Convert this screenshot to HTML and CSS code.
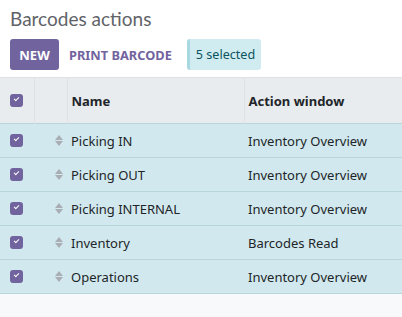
FILE: index.html
```html
<!DOCTYPE html>
<html>
<head>
<meta charset="utf-8">
<link rel="stylesheet" href="styles.css">
</head>
<body>
<div class="page">
  <div class="head">
    <h1 class="title">Barcodes actions</h1>
    <div class="actions">
      <button class="btn-primary">NEW</button>
      <button class="btn-link">PRINT BARCODE</button>
      <span class="badge">5 selected</span>
    </div>
  </div>
  <table class="list">
    <colgroup>
      <col class="w-check">
      <col class="w-handle">
      <col class="w-name">
      <col>
    </colgroup>
    <thead>
      <tr>
        <th class="c-check"><span class="cb"></span></th>
        <th class="c-handle"></th>
        <th>Name</th>
        <th>Action window</th>
      </tr>
    </thead>
    <tbody>
      <tr><td class="c-check"><span class="cb"></span></td><td class="c-handle"><span class="handle"></span></td><td>Picking IN</td><td>Inventory Overview</td></tr>
      <tr><td class="c-check"><span class="cb"></span></td><td class="c-handle"><span class="handle"></span></td><td>Picking OUT</td><td>Inventory Overview</td></tr>
      <tr><td class="c-check"><span class="cb"></span></td><td class="c-handle"><span class="handle"></span></td><td>Picking INTERNAL</td><td>Inventory Overview</td></tr>
      <tr><td class="c-check"><span class="cb"></span></td><td class="c-handle"><span class="handle"></span></td><td>Inventory</td><td>Barcodes Read</td></tr>
      <tr><td class="c-check"><span class="cb"></span></td><td class="c-handle"><span class="handle"></span></td><td>Operations</td><td>Inventory Overview</td></tr>
    </tbody>
  </table>
</div>
</body>
</html>
```

FILE: styles.css
```css
html, body {
  margin: 0;
  padding: 0;
  background: #f8f9fa;
  font-family: "Noto Sans", sans-serif;
  color: #212529;
}
.page {
  width: 402px;
  height: 317px;
  overflow: hidden;
}
.head {
  background: #ffffff;
  padding: 6px 10px 7px 10px;
  border-bottom: 1px solid #dee2e6;
}
.title {
  margin: 0;
  font-family: Lato, "Noto Sans", sans-serif;
  font-size: 19px;
  font-weight: 400;
  line-height: 25px;
  color: #5f6368;
}
.actions {
  display: flex;
  align-items: center;
  margin-top: 8px;
  height: 31px;
}
.btn-primary {
  height: 31px;
  width: 49px;
  border: none;
  border-radius: 3px;
  background: #71639e;
  color: #ffffff;
  font-family: inherit;
  font-weight: 700;
  font-size: 13px;
  padding: 0;
}
.btn-link {
  border: none;
  background: none;
  color: #71639e;
  font-family: inherit;
  font-weight: 700;
  font-size: 12.8px;
  padding: 0;
  margin-left: 10px;
}
.badge {
  margin-left: 15px;
  height: 31px;
  display: flex;
  align-items: center;
  padding: 0 6px 0 6px;
  background: #d1ecf1;
  border-left: 3px solid #a8d8e0;
  border-radius: 3px;
  color: #0c5460;
  font-size: 12.6px;
}
.list {
  width: 100%;
  border-collapse: collapse;
  table-layout: fixed;
  font-size: 13px;
}
.w-check { width: 34px; }
.w-handle { width: 33px; }
.w-name { width: 177px; }
.list th {
  background: #e9ecef;
  height: 45px;
  text-align: left;
  font-weight: 700;
  padding: 0 4px;
  border-left: 1px solid #dee2e6;
}
.list th:first-child { border-left: none; }
.list td {
  background: #d1e9ee;
  height: 33px;
  padding: 0 4px;
  border-top: 1px solid #b8d5db;
  white-space: nowrap;
}
.list tbody tr:last-child td {
  border-bottom: 1px solid #b8d5db;
}
.list .c-check {
  padding-left: 10px;
}
.cb {
  display: block;
  width: 13px;
  height: 13px;
  border-radius: 3px;
  background: #71639e;
  position: relative;
}
.cb::after {
  content: "";
  position: absolute;
  left: 4px;
  top: 3px;
  width: 4px;
  height: 2px;
  border-left: 1.5px solid #fff;
  border-bottom: 1.5px solid #fff;
  transform: rotate(-45deg);
}
.handle {
  display: block;
  width: 0;
  height: 11px;
  margin-left: 17px;
  position: relative;
}
.handle::before, .handle::after {
  content: "";
  position: absolute;
  left: 0;
  border-left: 4px solid transparent;
  border-right: 4px solid transparent;
}
.handle::before { top: 0; border-bottom: 5px solid #a9aeb4; }
.handle::after { bottom: 0; border-top: 5px solid #a9aeb4; }
```
